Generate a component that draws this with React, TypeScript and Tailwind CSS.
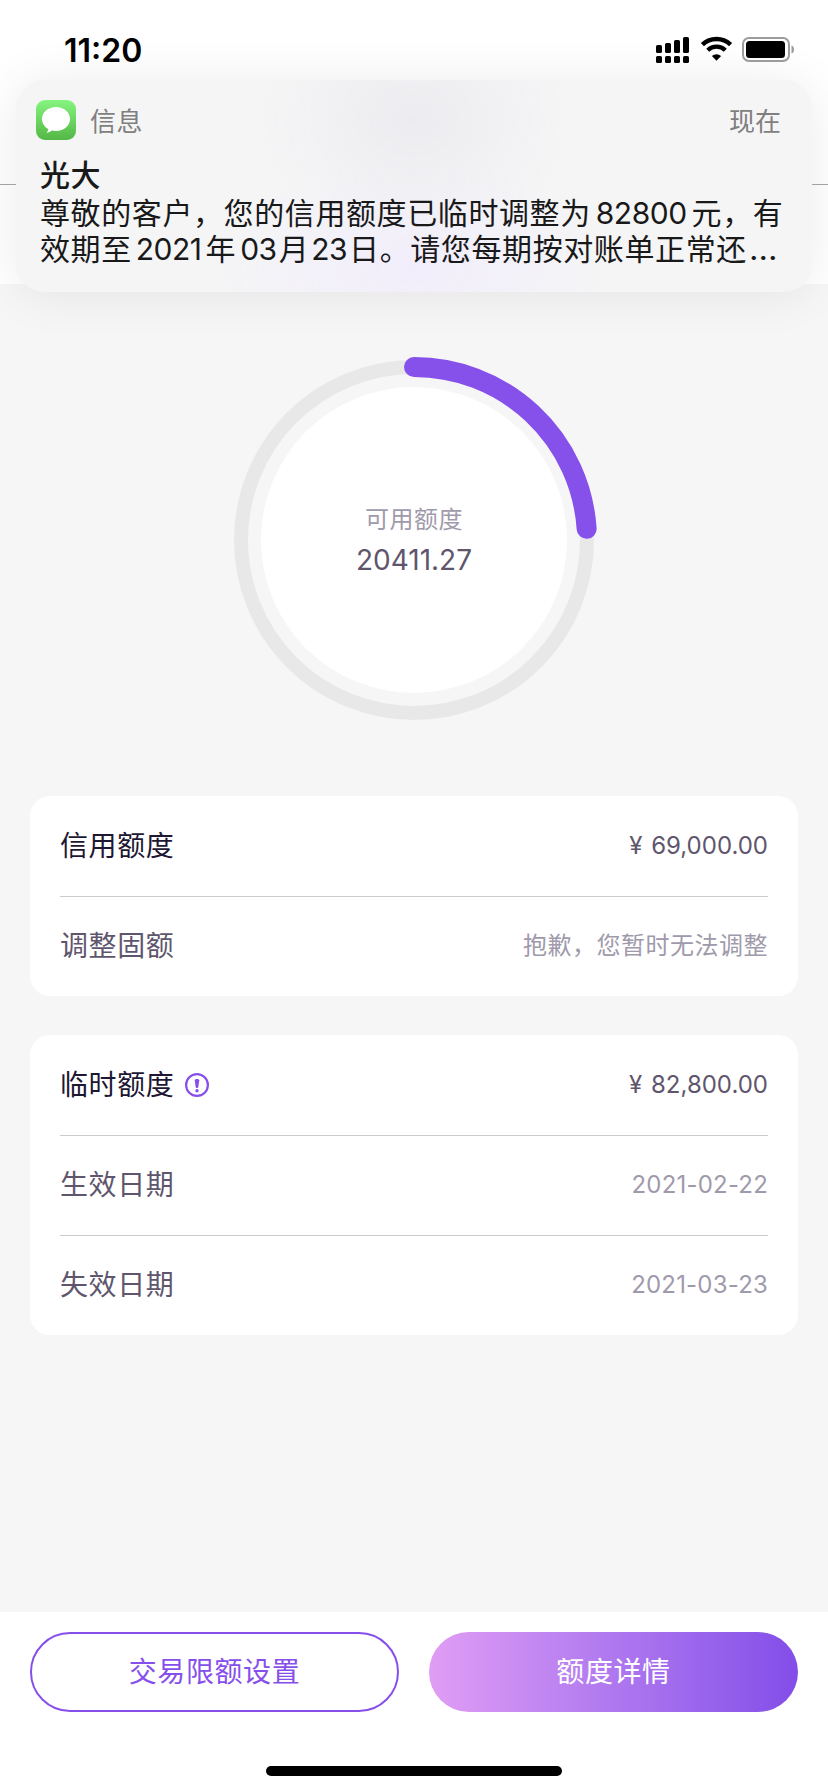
import React from 'react';

interface RowProps {
  label: string;
  value: string;
  kind: 'amount' | 'date' | 'message';
  hint?: boolean;
}

const valueStyles = {
  amount: 'text-[24px] [word-spacing:2px] text-[#5f566e]',
  date: 'text-[24px] tracking-[0.2px] text-[#9f9aab]',
  message: 'text-[24px] tracking-[0.5px] text-[#9f9aab]',
};

const StatusIcons: React.FC = () => (
  <svg width="142" height="30" viewBox="0 0 142 30" aria-hidden="true">
    {/* 信号 */}
    <rect x="1" y="10" width="6" height="8" rx="1.6" />
    <rect x="10" y="8" width="6" height="10" rx="1.6" />
    <rect x="19" y="5" width="6" height="13" rx="1.6" />
    <rect x="28" y="2" width="6" height="16" rx="1.6" />
    <rect x="1" y="21" width="6" height="7" rx="1.6" />
    <rect x="10" y="21" width="6" height="7" rx="1.6" />
    <rect x="19" y="21" width="6" height="7" rx="1.6" />
    <rect x="28" y="21" width="6" height="7" rx="1.6" />
    {/* Wi-Fi */}
    <g fill="none" stroke="#000">
      <path d="M47.4 9.6a20.4 20.4 0 0 1 28.2 0" strokeWidth="4.4" />
      <path d="M52.7 15.2a12.8 12.8 0 0 1 17.6 0" strokeWidth="4.2" />
    </g>
    <path d="M61.5 25.8l-4.6-4.7a6.7 6.7 0 0 1 9.2 0z" />
    {/* 电池 */}
    <rect x="88" y="3" width="46" height="23" rx="6" fill="none" stroke="#9c9c9c" strokeWidth="2" />
    <rect x="91" y="6" width="39" height="17" rx="3.5" />
    <path d="M136.5 10.5c3.4 1 3.4 7 0 8z" fill="#9c9c9c" />
  </svg>
);

const MessagesIcon: React.FC = () => (
  <svg width="40" height="40" viewBox="0 0 40 40" aria-hidden="true">
    <defs>
      <linearGradient id="messages" x1="0" y1="0" x2="0" y2="1">
        <stop offset="0" stopColor="#86f57f" />
        <stop offset="1" stopColor="#54b745" />
      </linearGradient>
    </defs>
    <rect width="40" height="40" rx="9" fill="url(#messages)" />
    <path
      d="M20 7c7.9 0 14 5.3 14 12s-6.1 12-14 12c-1.5 0-2.9-.2-4.2-.5-1.4 1.2-3.3 2.2-5.3 2.3 1-.9 1.7-2.3 1.800-3.800C8.500 26.900 6 23.200 6 19 6 12.300 12.100 7 20 7z"
      fill="#fff"
    />
  </svg>
);

const HintIcon: React.FC = () => (
  <svg width="24" height="24" viewBox="0 0 24 24" aria-hidden="true">
    <circle cx="12" cy="12" r="10.9" fill="none" stroke="#874fea" strokeWidth="2.2" />
    <path d="M9.8 7.2c0-1.600 4.400-1.600 4.400 0l-.9 7c-.2 1-2.400 1-2.600 0z" fill="#874fea" />
    <circle cx="12" cy="17.8" r="1.7" fill="#874fea" />
  </svg>
);

const Row: React.FC<RowProps> = ({ label, value, kind, hint }) => (
  <div className="flex h-[100px] items-center justify-between border-t border-[#cbcbcd] pb-0.5 first:border-transparent">
    <div className="flex items-center gap-[11px]">
      <span
        className={
          kind === 'amount'
            ? 'text-[28px] tracking-[0.6px] text-[#1d1733]'
            : 'text-[28px] tracking-[0.6px] text-[#5f566e]'
        }
      >
        {label}
      </span>
      {hint && <HintIcon />}
    </div>
    <span className={valueStyles[kind]}>{value}</span>
  </div>
);

const Notification: React.FC = () => (
  <div className="absolute left-4 top-20 h-[212px] w-[796px] rounded-[28px] bg-[#f5f5f6] shadow-[0_2px_50px_rgba(0,0,0,0.08)]">
    <div className="h-full rounded-[28px] bg-[radial-gradient(ellipse_150px_120px_at_398px_40px,#ececf0,transparent),radial-gradient(ellipse_190px_110px_at_398px_190px,#f1edfb,transparent)] px-5 pt-5">
      <div className="flex h-10 items-center">
        <MessagesIcon />
        <span className="ml-[14px] pt-0.5 text-[26px] tracking-[0.6px] text-[#7f7f80]">信息</span>
        <span className="ml-auto mr-[11px] pt-0.5 text-[26px] text-[#7f7f80]">现在</span>
      </div>
      <div className="mt-[17px] pl-1 text-[30px] leading-[36px] tracking-[0.6px] whitespace-nowrap text-[#19191a]">
        <p className="mb-0.5 font-medium">光大</p>
        <p>
          尊敬的客户，您的信用额度已临时调整为<span className="mx-[5px] tracking-[-0.5px]">82800</span>元，有
        </p>
        <p>
          效期至<span className="mx-1 tracking-[-0.5px]">2021</span>年
          <span className="ml-1 mr-0.5 tracking-[-0.5px]">03</span>月
          <span className="mx-0.5 tracking-[-0.5px]">23</span>日。请您每期按对账单正常还
          <span className="ml-0.5 inline-block origin-left scale-x-110">…</span>
        </p>
      </div>
    </div>
  </div>
);

const App: React.FC = () => {
  // 可用额度占比
  const radius = 173;
  const circumference = 2 * Math.PI * radius;
  const used = (86.25 / 360) * circumference;

  return (
    <div className="relative flex h-[1792px] w-[828px] flex-col overflow-hidden bg-[#f6f6f6] font-['Inter','Noto_Sans_CJK_SC',sans-serif]">
      <header className="h-[284px] bg-white">
        <div className="h-[185px] border-b border-[#a8a8a8]" />
      </header>

      <main className="flex flex-1 flex-col px-[30px]">
        {/* 额度圆环 */}
        <div className="mx-auto mt-[66px] grid h-[380px] w-[380px]">
          <svg className="col-start-1 row-start-1" width="380" height="380" viewBox="0 0 380 380">
            <circle cx="190" cy="190" r={radius} fill="none" stroke="#e8e8e8" strokeWidth="14" />
            <circle cx="190" cy="190" r="153" fill="#fff" />
            <circle
              cx="190"
              cy="190"
              r={radius}
              fill="none"
              stroke="#8650ea"
              strokeWidth="20"
              strokeLinecap="round"
              strokeDasharray={`${used} ${circumference}`}
              transform="rotate(-90 190 190)"
            />
          </svg>
          <div className="col-start-1 row-start-1 flex flex-col items-center pt-[150px]">
            <span className="text-[24px] leading-[40px] tracking-[0.5px] text-[#9f9aab]">可用额度</span>
            <span className="text-[28px] leading-[40px] text-[#5f566e]">20411.27</span>
          </div>
        </div>

        <section className="mt-[66px] rounded-[20px] bg-white px-[30px]">
          <Row label="信用额度" value="¥ 69,000.00" kind="amount" />
          <Row label="调整固额" value="抱歉，您暂时无法调整" kind="message" />
        </section>

        <section className="mt-[39px] rounded-[20px] bg-white px-[30px]">
          <Row label="临时额度" value="¥ 82,800.00" kind="amount" hint />
          <Row label="生效日期" value="2021-02-22" kind="date" />
          <Row label="失效日期" value="2021-03-23" kind="date" />
        </section>
      </main>

      <footer className="flex h-[180px] flex-col items-center bg-white px-[30px] pt-5">
        <div className="grid w-full grid-cols-2 gap-[30px]">
          <button className="h-20 rounded-full border-2 border-[#874fea] text-[28px] tracking-[0.6px] text-[#874fea]">
            交易限额设置
          </button>
          <button className="h-20 rounded-full bg-linear-to-r from-[#e09df4] to-[#834de8] text-[28px] tracking-[0.6px] text-white">
            额度详情
          </button>
        </div>
        <div className="mt-[54px] h-[10px] w-[296px] rounded-full bg-black" />
      </footer>

      <Notification />

      <div className="absolute inset-x-0 top-[35px] flex h-[30px] items-center justify-between pl-16 pr-[31px]">
        <span className="pt-px text-[32px] font-semibold text-black">11:20</span>
        <StatusIcons />
      </div>
    </div>
  );
};

export default App;
